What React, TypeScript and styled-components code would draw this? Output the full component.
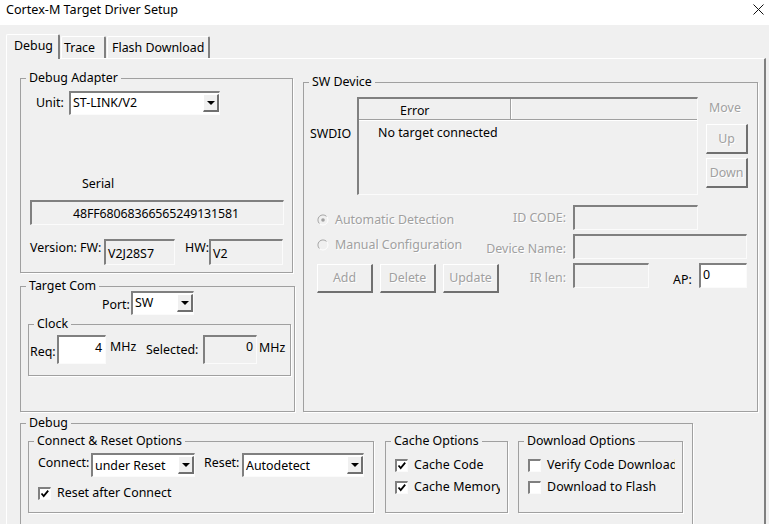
import React from "react";
import styled, { createGlobalStyle } from "styled-components";

const GlobalStyle = createGlobalStyle`
  html, body {
    margin: 0;
    padding: 0;
    background: #f0f0f0;
  }
  * {
    box-sizing: border-box;
  }
`;

const Dialog = styled.div`
  width: 769px;
  height: 524px;
  overflow: hidden;
  background: #f0f0f0;
  color: #000;
  font-family: "Noto Sans", sans-serif;
  font-size: 12.4px;
  line-height: 16px;
`;

const TitleBar = styled.div`
  height: 25px;
  background: #fff;
  display: flex;
  justify-content: space-between;
  padding: 2px 5px 0 6px;
  font-size: 12.6px;
`;

const CloseIcon = styled.svg`
  width: 11px;
  height: 11px;
  margin-top: 2px;
`;

const TabStrip = styled.div`
  height: 33px;
  padding: 9px 0 0 6px;
  display: flex;
  align-items: flex-end;
`;

const Tab = styled.div<{ $active?: boolean; $w: number; $pl: number }>`
  width: ${(p) => p.$w}px;
  height: ${(p) => (p.$active ? 25 : 22)}px;
  margin-right: 1px;
  padding: 3px 0 0 ${(p) => p.$pl}px;
  margin-bottom: ${(p) => (p.$active ? -1 : 0)}px;
  position: relative;
  background: #f0f0f0;
  border-top: 1px solid #fff;
  border-left: 1px solid #fff;
  border-right: 2px solid #808080;
  border-radius: 2px 2px 0 0;
`;

const Page = styled.div`
  width: 760px;
  height: 466px;
  margin-left: 6px;
  padding: 11px 0 0 13px;
  border-top: 1px solid #fff;
  border-left: 1px solid #fff;
  border-right: 2px solid #808080;
`;

const TopGrid = styled.div`
  display: grid;
  grid-template-columns: 283px 455px;
  height: 342px;
`;

const LeftColumn = styled.div`
  display: flex;
  flex-direction: column;
  gap: 5px;
`;

const Group = styled.fieldset<{ $w: number; $h: number; $mt?: number; $ml?: number }>`
  width: ${(p) => p.$w}px;
  height: ${(p) => p.$h}px;
  min-width: 0;
  flex-shrink: 0;
  margin: ${(p) => p.$mt ?? 0}px 0 0 ${(p) => p.$ml ?? 0}px;
  padding: 0;
  border: 1px solid #a0a0a0;
  box-shadow: 1px 1px 0 #fff;
`;

const GroupTitle = styled.legend`
  margin-left: 5px;
  padding: 0 3px;
  line-height: 16px;
`;

const Row = styled.div<{ $mt?: number; $pl?: number }>`
  display: flex;
  align-items: flex-start;
  margin-top: ${(p) => p.$mt ?? 0}px;
  padding-left: ${(p) => p.$pl ?? 0}px;
`;

const Label = styled.div<{ $w?: number; $mt?: number; $ml?: number; $off?: boolean }>`
  flex-shrink: 0;
  white-space: nowrap;
  width: ${(p) => (p.$w ? `${p.$w}px` : "auto")};
  margin-top: ${(p) => p.$mt ?? 0}px;
  margin-left: ${(p) => p.$ml ?? 0}px;
  color: ${(p) => (p.$off ? "#a0a0a0" : "#000")};
  text-shadow: ${(p) => (p.$off ? "1px 1px 0 #fff" : "none")};
`;

const Field = styled.div<{
  $w: number;
  $h?: number;
  $white?: boolean;
  $align?: string;
  $pt?: number;
  $ml?: number;
}>`
  flex-shrink: 0;
  width: ${(p) => p.$w}px;
  height: ${(p) => p.$h ?? 25}px;
  margin-left: ${(p) => p.$ml ?? 0}px;
  padding: ${(p) => p.$pt ?? 4}px 3px 0 2px;
  text-align: ${(p) => p.$align ?? "left"};
  background: ${(p) => (p.$white ? "#fff" : "#f0f0f0")};
  border-style: solid;
  border-width: 2px 1px 1px 2px;
  border-color: #808080 #fbfbfb #fbfbfb #808080;
`;

const SerialField = styled(Field)`
  letter-spacing: -0.12px;
  padding-right: 5px;
`;

const ComboBox = styled.div<{ $w: number }>`
  flex-shrink: 0;
  width: ${(p) => p.$w}px;
  height: 24px;
  background: #fff;
  padding: 2px 0 0 2px;
  display: flex;
  justify-content: space-between;
  border-style: solid;
  border-width: 2px 1px 1px 2px;
  border-color: #808080 #fbfbfb #fbfbfb #808080;
`;

const ComboValue = styled.span<{ $low?: boolean }>`
  margin-top: ${(p) => (p.$low ? 1 : 0)}px;
`;

const ComboButton = styled.span`
  width: 16px;
  height: 18px;
  margin: -1px 0 0 0;
  background: #f0f0f0;
  border-style: solid;
  border-width: 1px 2px 2px 1px;
  border-color: #fff #707070 #707070 #fff;
  display: flex;
  align-items: center;
  justify-content: center;
  &::after {
    content: "";
    border-style: solid;
    border-width: 4px 4px 0 4px;
    border-color: #000 transparent transparent transparent;
  }
`;

const Combo: React.FC<{ w: number; value: string; low?: boolean }> = ({ w, value, low }) => (
  <ComboBox $w={w}>
    <ComboValue $low={low}>{value}</ComboValue>
    <ComboButton />
  </ComboBox>
);

const BottomGroups = styled.div`
  display: flex;
  gap: 10px;
  padding-left: 7px;
  margin-top: 2px;
`;

const OptionList = styled.div`
  letter-spacing: 0.1px;
`;

const CheckRow = styled.div<{ $w: number; $mt?: number }>`
  display: flex;
  align-items: center;
  width: ${(p) => p.$w}px;
  height: 16px;
  margin-top: ${(p) => p.$mt ?? 0}px;
  margin-left: 9px;
  gap: 6px;
  white-space: nowrap;
  overflow: hidden;
`;

const CheckBoxFrame = styled.span`
  flex-shrink: 0;
  width: 13px;
  height: 13px;
  background: #fff;
  border-style: solid;
  border-width: 2px 1px 1px 2px;
  border-color: #808080 #fbfbfb #fbfbfb #808080;
  display: flex;
`;

const Check: React.FC<{ w: number; mt?: number; on?: boolean; children: React.ReactNode }> = ({
  w,
  mt,
  on,
  children,
}) => (
  <CheckRow $w={w} $mt={mt}>
    <CheckBoxFrame>
      {on && (
        <svg width="10" height="10" viewBox="0 0 10 10">
          <path d="M1.5 4.5 L3.7 7 L8.2 1.6" fill="none" stroke="#000" strokeWidth="1.8" />
        </svg>
      )}
    </CheckBoxFrame>
    {children}
  </CheckRow>
);

const DeviceTop = styled.div`
  display: flex;
  align-items: flex-start;
  padding: 7px 0 0 6px;
`;

const ChainTable = styled.div`
  flex-shrink: 0;
  width: 341px;
  height: 98px;
  border-style: solid;
  border-width: 2px 1px 1px 2px;
  border-color: #808080 #fbfbfb #fbfbfb #808080;
`;

const ChainHead = styled.div`
  height: 21px;
  display: flex;
  border-bottom: 1px solid #a0a0a0;
  box-shadow: 0 1px 0 #fff;
`;

const ChainHeadCell = styled.div<{ $w: number }>`
  width: ${(p) => p.$w}px;
  padding: 4px 0 0 41px;
  border-right: 1px solid #a0a0a0;
  box-shadow: 1px 0 0 #fff;
`;

const ChainBody = styled.div`
  padding: 5px 0 0 19px;
`;

const MoveColumn = styled.div`
  width: 42px;
  margin-left: 8px;
  display: flex;
  flex-direction: column;
  align-items: center;
`;

const PushButton = styled.button<{ $w: number; $mt?: number; $h?: number }>`
  flex-shrink: 0;
  width: ${(p) => p.$w}px;
  height: ${(p) => p.$h ?? 29}px;
  margin: ${(p) => p.$mt ?? 0}px 0 0 0;
  padding: 0;
  background: #f0f0f0;
  font: inherit;
  color: #a0a0a0;
  text-shadow: 1px 1px 0 #fff;
  border-style: solid;
  border-width: 1px 2px 2px 1px;
  border-color: #fff #707070 #707070 #fff;
`;

const DeviceGrid = styled.div`
  display: grid;
  grid-template-columns: 256px 174px;
  row-gap: 4px;
  grid-auto-rows: 25px;
  margin: 10px 0 0 13px;
`;

const DeviceLeft = styled.div`
  display: flex;
  justify-content: space-between;
  align-items: flex-start;
  padding-right: 7px;
`;

const DeviceRight = styled.div`
  display: flex;
  align-items: flex-start;
`;

const RadioRow = styled.div<{ $mt: number }>`
  display: flex;
  align-items: center;
  gap: 6px;
  margin-top: ${(p) => p.$mt}px;
  height: 16px;
`;

const ButtonRow = styled.div`
  display: flex;
  gap: 7px;
  margin-top: 1px;
`;

const Radio: React.FC<{ on?: boolean }> = ({ on }) => (
  <svg width="12" height="12" viewBox="0 0 12 12">
    <circle cx="6" cy="6" r="5" fill="#f0f0f0" stroke="#fff" />
    <path d="M2.4 9.5 A5 5 0 0 1 9.5 2.4" fill="none" stroke="#a0a0a0" />
    {on && <circle cx="6" cy="6" r="1.8" fill="#a0a0a0" />}
  </svg>
);

const App: React.FC = () => (
  <>
    <GlobalStyle />
    <Dialog>
      <TitleBar>
        <span>Cortex-M Target Driver Setup</span>
        <CloseIcon viewBox="0 0 11 11">
          <path d="M0.5 0.5 L10.5 10.5 M10.5 0.5 L0.5 10.5" stroke="#111" fill="none" />
        </CloseIcon>
      </TitleBar>
      <TabStrip>
        <Tab $active $w={54} $pl={7}>
          Debug
        </Tab>
        <Tab $w={45} $pl={2}>
          Trace
        </Tab>
        <Tab $w={103} $pl={4}>
          Flash Download
        </Tab>
      </TabStrip>
      <Page>
        <TopGrid>
          <LeftColumn>
            <Group $w={273} $h={203}>
              <GroupTitle>Debug Adapter</GroupTitle>
              <Row $mt={5} $pl={15}>
                <Label $w={33} $mt={4}>
                  Unit:
                </Label>
                <Combo w={151} value="ST-LINK/V2" />
              </Row>
              <Row $mt={61} $pl={61}>
                <Label>Serial</Label>
              </Row>
              <Row $mt={8} $pl={9}>
                <SerialField $w={254} $align="center">
                  48FF68068366565249131581
                </SerialField>
              </Row>
              <Row $mt={14} $pl={9}>
                <Label $w={74} $mt={1}>
                  Version: FW:
                </Label>
                <Field $w={71} $h={26} $pt={5}>
                  V2J28S7
                </Field>
                <Label $w={24} $ml={10} $mt={1}>
                  HW:
                </Label>
                <Field $w={74} $h={26} $pt={5}>
                  V2
                </Field>
              </Row>
            </Group>
            <Group $w={275} $h={134}>
              <GroupTitle>Target Com</GroupTitle>
              <Row $mt={-3} $pl={81}>
                <Label $w={29} $mt={6}>
                  Port:
                </Label>
                <Combo w={63} value="SW" />
              </Row>
              <Group $w={263} $h={60} $mt={1} $ml={7}>
                <GroupTitle>Clock</GroupTitle>
                <Row $mt={3} $pl={1}>
                  <Label $w={27} $mt={9}>
                    Req:
                  </Label>
                  <Field $w={49} $h={29} $white $align="right" $pt={3}>
                    4
                  </Field>
                  <Label $w={36} $mt={4} $ml={4}>
                    MHz
                  </Label>
                  <Label $w={57} $mt={7}>
                    Selected:
                  </Label>
                  <Field $w={54} $h={29} $align="right" $pt={2}>
                    0
                  </Field>
                  <Label $mt={5} $ml={2}>
                    MHz
                  </Label>
                </Row>
              </Group>
            </Group>
          </LeftColumn>
          <Group $w={455} $h={338} $mt={4}>
            <GroupTitle>SW Device</GroupTitle>
            <DeviceTop>
              <Label $w={47} $mt={29}>
                SWDIO
              </Label>
              <ChainTable>
                <ChainHead>
                  <ChainHeadCell $w={152}>Error</ChainHeadCell>
                </ChainHead>
                <ChainBody>No target connected</ChainBody>
              </ChainTable>
              <MoveColumn>
                <Label $off $mt={3} $ml={-4}>
                  Move
                </Label>
                <PushButton $w={42} $h={30} $mt={8}>
                  Up
                </PushButton>
                <PushButton $w={42} $h={30} $mt={4}>
                  Down
                </PushButton>
              </MoveColumn>
            </DeviceTop>
            <DeviceGrid>
              <DeviceLeft>
                <RadioRow $mt={7}>
                  <Radio on />
                  <Label $off>Automatic Detection</Label>
                </RadioRow>
                <Label $off $mt={5}>
                  ID CODE:
                </Label>
              </DeviceLeft>
              <DeviceRight>
                <Field $w={125} />
              </DeviceRight>
              <DeviceLeft>
                <RadioRow $mt={3}>
                  <Radio />
                  <Label $off>Manual Configuration</Label>
                </RadioRow>
                <Label $off $mt={7}>
                  Device Name:
                </Label>
              </DeviceLeft>
              <DeviceRight>
                <Field $w={174} />
              </DeviceRight>
              <DeviceLeft>
                <ButtonRow>
                  <PushButton $w={56}>Add</PushButton>
                  <PushButton $w={56}>Delete</PushButton>
                  <PushButton $w={56}>Update</PushButton>
                </ButtonRow>
                <Label $off $mt={7}>
                  IR len:
                </Label>
              </DeviceLeft>
              <DeviceRight>
                <Field $w={76} />
                <Label $ml={24} $w={26} $mt={9}>
                  AP:
                </Label>
                <Field $w={48} $white $pt={2}>
                  0
                </Field>
              </DeviceRight>
            </DeviceGrid>
          </Group>
        </TopGrid>
        <Group $w={673} $h={150} $mt={3}>
          <GroupTitle>Debug</GroupTitle>
          <BottomGroups>
            <Group $w={346} $h={80}>
              <GroupTitle>Connect &amp; Reset Options</GroupTitle>
              <Row $mt={4} $pl={9}>
                <Label $w={53} $mt={2}>
                  Connect:
                </Label>
                <Combo w={104} value="under Reset" low />
                <Label $w={38} $ml={9} $mt={2}>
                  Reset:
                </Label>
                <Combo w={122} value="Autodetect" low />
              </Row>
              <Check w={160} mt={8} on>
                Reset after Connect
              </Check>
            </Group>
            <Group $w={123} $h={80} $ml={1}>
              <GroupTitle>Cache Options</GroupTitle>
              <OptionList>
                <Check w={105} mt={8} on>
                  Cache Code
                </Check>
                <Check w={105} mt={6} on>
                  Cache Memory
                </Check>
              </OptionList>
            </Group>
            <Group $w={165} $h={80}>
              <GroupTitle>Download Options</GroupTitle>
              <OptionList>
                <Check w={147} mt={8}>
                  Verify Code Download
                </Check>
                <Check w={147} mt={6}>
                  Download to Flash
                </Check>
              </OptionList>
            </Group>
          </BottomGroups>
        </Group>
      </Page>
    </Dialog>
  </>
);

export default App;
